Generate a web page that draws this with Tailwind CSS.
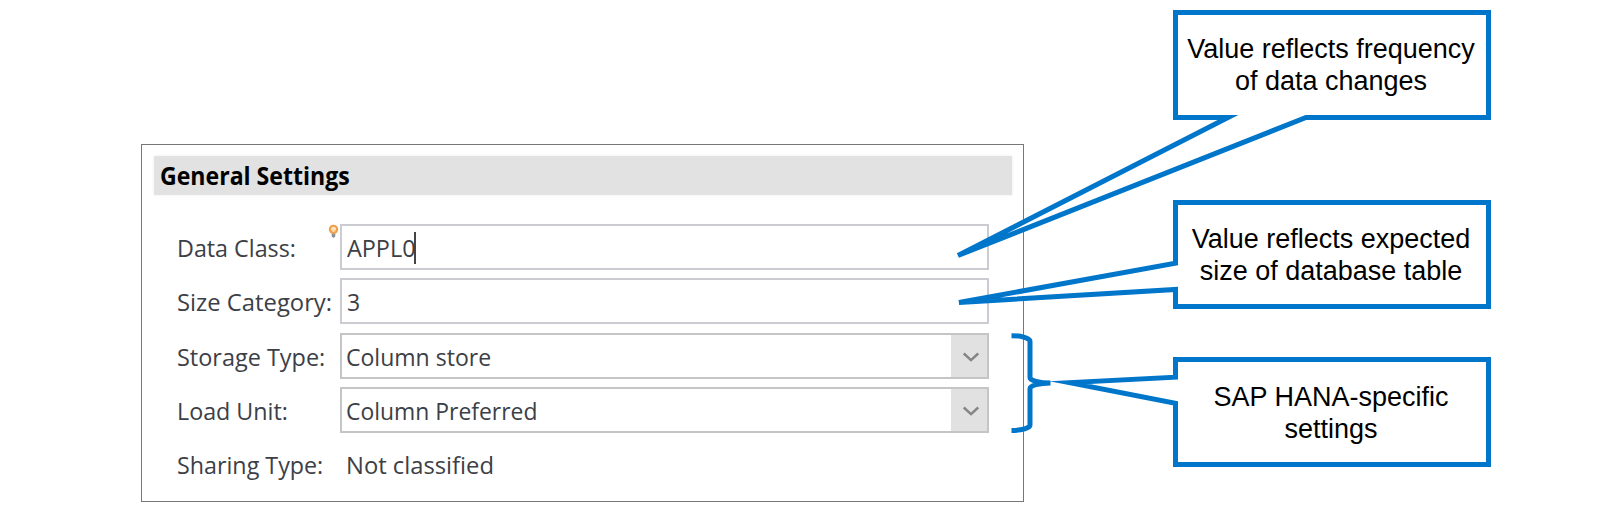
<!DOCTYPE html>
<html lang="en">
<head>
<meta charset="utf-8">
<title>General Settings</title>
<script src="https://cdn.jsdelivr.net/npm/@tailwindcss/browser@4"></script>
</head>
<body class="relative flex h-[513px] w-[1600px] items-start overflow-hidden bg-white">
  <main class="mt-[144px] ml-[141px] h-[358px] w-[883px] shrink-0 border border-[#777777] bg-white pt-[11px] pl-[12px] font-['Open_Sans',sans-serif] text-[24.5px] leading-[32px] text-[#3c4046]">
    <h1 class="flex h-[39px] w-[858px] items-center bg-[#e2e2e2] pl-[6px] font-bold text-black shadow-[0_0_3px_#ececec]">
      <span class="origin-left scale-x-[0.942] whitespace-nowrap">General Settings</span>
    </h1>
    <div class="mt-[25px] ml-[22px] w-[812px]">
      <div class="flex h-[54.3px] items-center">
        <div class="relative w-[164px] shrink-0 pt-[2px] pl-[1px]">
          <span class="inline-block origin-left scale-x-[0.95] whitespace-nowrap">Data Class:</span>
          <svg class="absolute -top-[6px] left-[152px] h-[15px] w-[11px]" viewBox="0 0 10 14" fill="none"><circle cx="5" cy="5" r="3.4" fill="#fbe3bd" stroke="#f0a04b" stroke-width="2"/><path d="M3.5 8V5.8M6.5 8V5.8" stroke="#f0a04b"/><path d="M3.3 9h3.4v2.6L5 13l-1.700-1.400z" fill="#8d9299"/></svg>
        </div>
        <div class="flex h-[46px] w-[649px] shrink-0 items-center border-2 border-[#cbccd2] pt-[2px] pl-[5px]">
          <span class="w-[67px] origin-left scale-x-[0.955] whitespace-nowrap">APPL0</span>
          <span class="h-[32px] w-[2px] bg-[#444444]"></span>
        </div>
      </div>
      <div class="flex h-[54.3px] items-center">
        <div class="w-[164px] shrink-0 pt-[2px] pl-[1px]"><span class="inline-block origin-left scale-x-[0.972] whitespace-nowrap">Size Category:</span></div>
        <div class="flex h-[46px] w-[649px] shrink-0 items-center border-2 border-[#cbccd2] pt-[2px] pl-[5px]">
          <span class="origin-left scale-x-[0.94] whitespace-nowrap">3</span>
        </div>
      </div>
      <div class="flex h-[54.3px] items-center">
        <div class="w-[164px] shrink-0 pt-[2px] pl-[1px]"><span class="inline-block origin-left scale-x-[0.957] whitespace-nowrap">Storage Type:</span></div>
        <div class="flex h-[46px] w-[649px] shrink-0 items-center justify-between border-2 border-[#c5c5c5] pl-[4px]">
          <span class="origin-left scale-x-[0.94] pt-[2px] whitespace-nowrap">Column store</span>
          <span class="flex h-full w-[36px] items-center justify-center bg-[#e1e1e1] pt-[2px] pl-[4px]"><svg class="h-[10px] w-[16px]" viewBox="0 0 16 10" fill="none"><path d="M.8 1.500 8 8.200l7.200-6.700" stroke="#858585" stroke-width="2.400"/></svg></span>
        </div>
      </div>
      <div class="flex h-[54.3px] items-center">
        <div class="w-[164px] shrink-0 pt-[2px] pl-[1px]"><span class="inline-block origin-left scale-x-[0.95] whitespace-nowrap">Load Unit:</span></div>
        <div class="flex h-[46px] w-[649px] shrink-0 items-center justify-between border-2 border-[#c5c5c5] pl-[4px]">
          <span class="origin-left scale-x-[0.935] pt-[2px] whitespace-nowrap">Column Preferred</span>
          <span class="flex h-full w-[36px] items-center justify-center bg-[#e1e1e1] pt-[2px] pl-[4px]"><svg class="h-[10px] w-[16px]" viewBox="0 0 16 10" fill="none"><path d="M.8 1.500 8 8.200l7.200-6.700" stroke="#858585" stroke-width="2.400"/></svg></span>
        </div>
      </div>
      <div class="flex h-[54.3px] items-center">
        <div class="w-[164px] shrink-0 pt-[2px] pl-[1px]"><span class="inline-block origin-left scale-x-[0.95] whitespace-nowrap">Sharing Type:</span></div>
        <span class="ml-[6px] origin-left scale-x-[0.97] pt-[2px] whitespace-nowrap">Not classified</span>
      </div>
    </div>
  </main>

  <!-- Callout outlines, their pointers and the brace, laid over the form -->
  <svg class="absolute top-0 left-0 h-[513px] w-[1600px]" viewBox="0 0 1600 513" fill="none" stroke="#0076cb" stroke-width="5" stroke-miterlimit="10">
    <path fill="#fff" d="M1175.500 12.500H1488.500V117.500H1306L958 255.500 1228 117.500H1175.500Z"/>
    <path fill="#fff" d="M1175.500 202.500H1488.500V306.500H1175.500V289.500L959 302.500 1175.500 263.200Z"/>
    <path fill="#fff" d="M1175.500 359.500H1488.500V464.500H1175.500V403.200L1070 382.600 1175.500 377.200Z"/>
    <path d="M1011.500 335.700A18.500 5.500 0 0 1 1030 341.200V377.500A20.500 5.500 0 0 0 1050.500 383A20.500 5.500 0 0 0 1030 388.500V425A18.500 5.500 0 0 1 1011.500 430.500"/>
  </svg>

  <aside class="relative ml-[148px] flex w-[318px] shrink-0 flex-col text-center font-['Liberation_Sans',sans-serif] text-[27px] leading-[32px] text-black">
    <p class="mt-[33px] whitespace-nowrap">Value reflects frequency<br>of data changes</p>
    <p class="mt-[126px] whitespace-nowrap">Value reflects expected<br>size of database table</p>
    <p class="mt-[94px] whitespace-nowrap">SAP HANA-specific<br>settings</p>
  </aside>
</body>
</html>
